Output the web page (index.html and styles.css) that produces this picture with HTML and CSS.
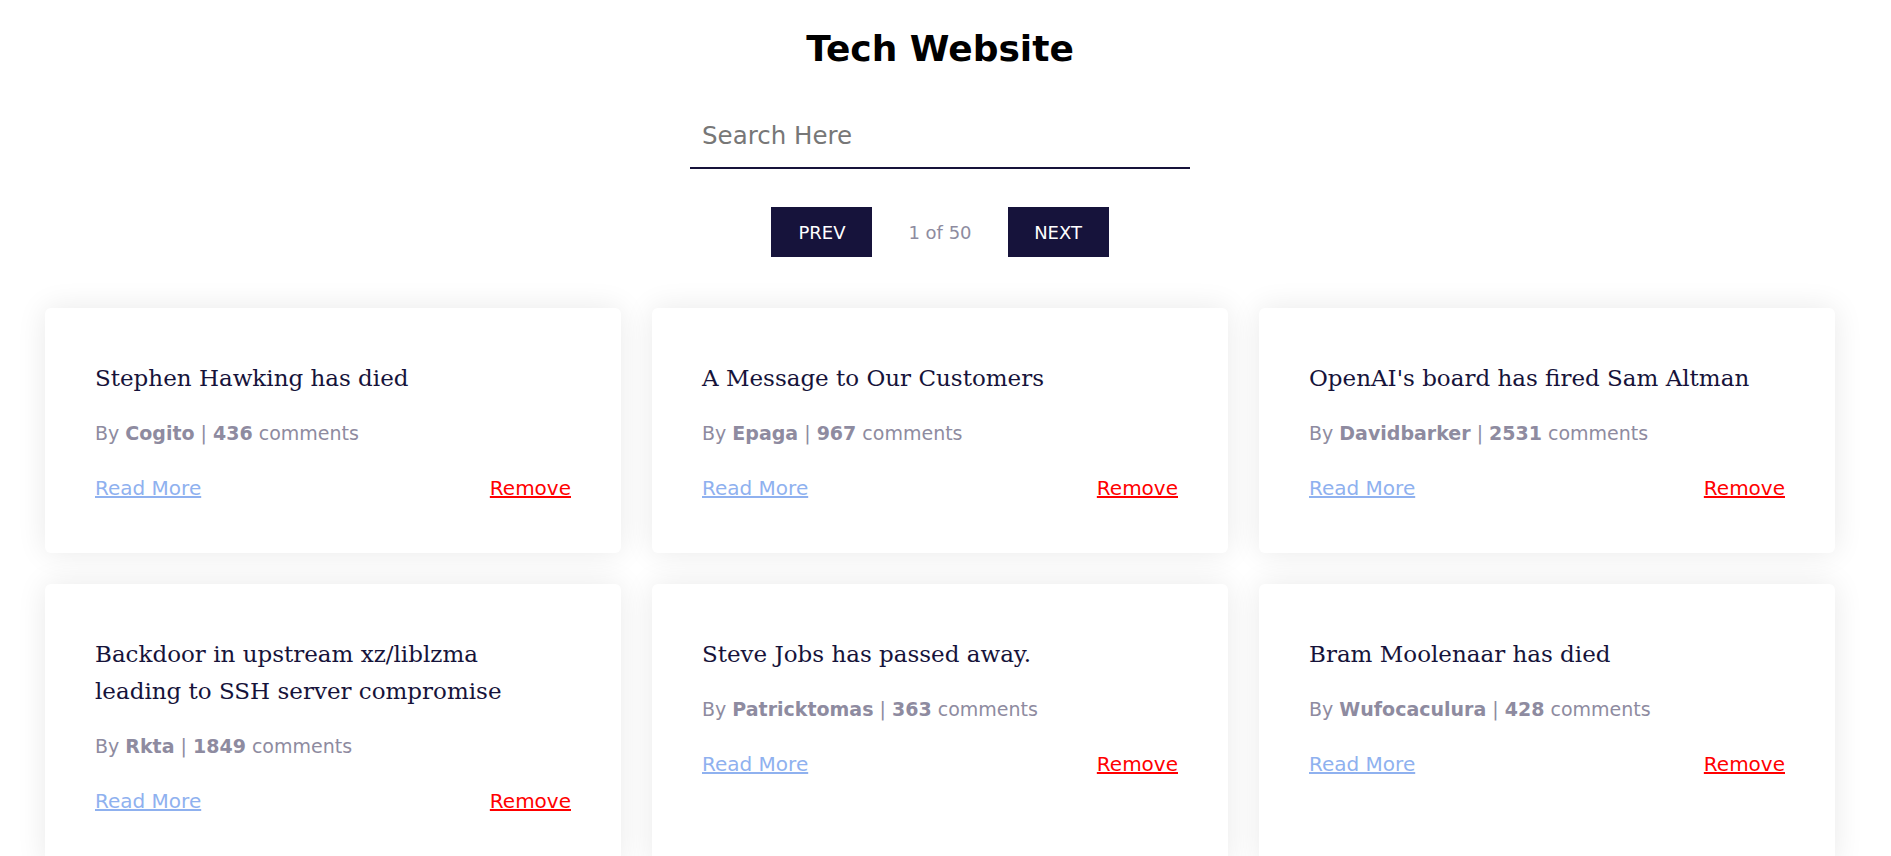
FILE: index.html
```html
<!DOCTYPE html>
<html lang="en">
<head>
<meta charset="utf-8">
<title>Tech Website</title>
<link rel="stylesheet" href="styles.css">
</head>
<body>
<header class="header">
  <h1 class="site-title">Tech Website</h1>
  <input class="search" type="text" placeholder="Search Here">
  <div class="pager">
    <button class="btn">PREV</button>
    <p class="page-info">1 of 50</p>
    <button class="btn">NEXT</button>
  </div>
</header>
<main class="grid">
  <article class="card">
    <h2 class="card-title">Stephen Hawking has died</h2>
    <p class="meta">By <b>Cogito</b> | <b>436</b> comments</p>
    <div class="actions"><a class="read" href="#">Read More</a><a class="remove" href="#">Remove</a></div>
  </article>
  <article class="card">
    <h2 class="card-title">A Message to Our Customers</h2>
    <p class="meta">By <b>Epaga</b> | <b>967</b> comments</p>
    <div class="actions"><a class="read" href="#">Read More</a><a class="remove" href="#">Remove</a></div>
  </article>
  <article class="card">
    <h2 class="card-title">OpenAI's board has fired Sam Altman</h2>
    <p class="meta">By <b>Davidbarker</b> | <b>2531</b> comments</p>
    <div class="actions"><a class="read" href="#">Read More</a><a class="remove" href="#">Remove</a></div>
  </article>
  <article class="card">
    <h2 class="card-title">Backdoor in upstream xz/liblzma leading to SSH server compromise</h2>
    <p class="meta">By <b>Rkta</b> | <b>1849</b> comments</p>
    <div class="actions"><a class="read" href="#">Read More</a><a class="remove" href="#">Remove</a></div>
  </article>
  <article class="card">
    <h2 class="card-title">Steve Jobs has passed away.</h2>
    <p class="meta">By <b>Patricktomas</b> | <b>363</b> comments</p>
    <div class="actions"><a class="read" href="#">Read More</a><a class="remove" href="#">Remove</a></div>
  </article>
  <article class="card">
    <h2 class="card-title">Bram Moolenaar has died</h2>
    <p class="meta">By <b>Wufocaculura</b> | <b>428</b> comments</p>
    <div class="actions"><a class="read" href="#">Read More</a><a class="remove" href="#">Remove</a></div>
  </article>
</main>
</body>
</html>
```

FILE: styles.css
```css
* { box-sizing: border-box; }

body {
  margin: 0;
  padding-right: 11px;
  background: #fff;
  font-family: "DejaVu Sans", "Noto Sans", sans-serif;
  color: #16133a;
}

.header {
  display: flex;
  flex-direction: column;
  align-items: center;
}

.site-title {
  margin: 29px 0 0;
  font-size: 36px;
  line-height: 40px;
  font-weight: 700;
  color: #000;
}

.search {
  margin-top: 31px;
  width: 500px;
  height: 69px;
  padding: 4px 12px 0;
  border: none;
  border-bottom: 2px solid #16133a;
  font-family: inherit;
  font-size: 24.5px;
  color: #16133a;
  outline: none;
  background: transparent;
}

.search::placeholder { color: #777; }

.pager {
  margin-top: 38px;
  display: flex;
  align-items: center;
  gap: 36px;
}

.btn {
  width: 101px;
  height: 50px;
  border: none;
  background: #16133b;
  color: #fff;
  font-family: inherit;
  font-size: 18px;
  cursor: pointer;
}

.page-info {
  margin: 0;
  font-size: 18px;
  color: #8e8ba0;
}

.grid {
  margin-top: 51px;
  padding: 0 45px;
  display: grid;
  grid-template-columns: repeat(3, 1fr);
  gap: 31px;
}

.card {
  background: #fff;
  border-radius: 6px;
  box-shadow: 0 0 30px rgba(0, 0, 0, 0.09);
  padding: 52px 50px 51px;
}

.card-title {
  margin: 0;
  font-family: "DejaVu Serif", serif;
  font-weight: 400;
  font-size: 23px;
  line-height: 37px;
  color: #16133a;
}

.meta {
  margin: 23px 0 0;
  font-size: 19px;
  line-height: 27px;
  color: #8e8ba0;
}

.meta b { font-weight: 700; }

.actions {
  margin-top: 28px;
  display: flex;
  justify-content: space-between;
  font-size: 20px;
  line-height: 27px;
}

.read { color: #8fb1ef; }
.remove { color: #ff0000; }
```
